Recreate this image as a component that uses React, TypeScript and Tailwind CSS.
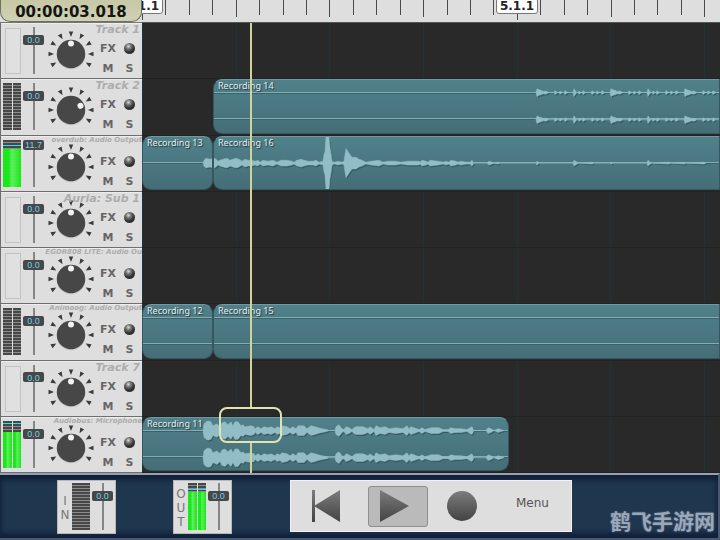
import React from "react";

type MeterState = { kind: "empty" } | { kind: "mono" | "stereo"; peak?: number; level?: number };

type Envelope = { width: number; points: [number, number][] };

type Clip = {
  title: string;
  size: string;
  channels: 1 | 2;
  wave?: Envelope;
};

type Track = {
  name: string;
  small?: boolean;
  gain: number;
  label: string;
  pan: number;
  meter: MeterState;
  delayed?: boolean;
  clips: Clip[];
};

const idle: MeterState = { kind: "empty" };
const dark: MeterState = { kind: "stereo" };

/* Envelopes: pairs of time (px from the clip's start) and amplitude. */
const wave13: Envelope = {
  width: 70,
  points: [[60, 0], [61, 3], [63, 5], [67, 4], [70, 5]],
};

const drumHit = (start: number, loud: number): [number, number][] => {
  const hit = (at: number, amp: number): [number, number][] => [
    [start + at - 1, 0],
    [start + at, amp],
    [start + at + 2, amp / 4],
    [start + at + 3, 0],
  ];
  return [
    [start - 1, 0],
    [start, loud],
    [start + 2, loud * 0.7],
    [start + 5, loud * 0.5],
    [start + 6, loud * 0.3],
    [start + 9, loud * 0.4],
    [start + 12, 0],
    ...hit(18, loud * 0.5),
    ...hit(23, loud * 0.4),
    ...hit(28, loud * 0.5),
    ...hit(37, loud),
    ...hit(42, loud * 0.4),
    ...hit(46, loud * 0.5),
    ...hit(55, loud * 0.5),
    ...hit(60, loud * 0.4),
    ...hit(65, loud * 0.5),
  ];
};

const wave14: Envelope = {
  width: 520,
  points: [...drumHit(323, 4), ...drumHit(397, 4), ...drumHit(471, 4)],
};

const wave16: Envelope = {
  width: 520,
  points: [
    [0, 5], [2, 4], [4, 2], [6, 3], [9, 4], [13, 5], [16, 3], [19, 4], [22, 5], [25, 4], [28, 2],
    [31, 4], [34, 3], [38, 3], [41, 2], [44, 3], [46, 1], [49, 3], [54, 2], [59, 3], [63, 1],
    [67, 3], [73, 3], [78, 2], [80, 1], [83, 3], [87, 4], [90, 3], [94, 2], [99, 2], [102, 3],
    [105, 1], [109, 2], [110, 9], [111, 12], [112, 27], [115, 27], [116, 16], [117, 10], [118, 3], [119, 1],
    [121, 1], [124, 2], [128, 1], [130, 2], [131, 9], [132, 15], [134, 12], [136, 9], [138, 6],
    [142, 6], [145, 4], [148, 3], [152, 1], [157, 2], [165, 3], [169, 1], [174, 2], [181, 2],
    [187, 1], [194, 2], [199, 2], [205, 2], [206, 1], [208, 3], [212, 2], [214, 1], [216, 3],
    [224, 2], [229, 1], [232, 2], [235, 1], [237, 3], [242, 2], [244, 1], [247, 2], [252, 1],
    [256, 1], [258, 3], [260, 0], [273, 0], [275, 2], [278, 1], [280, 0],
    [284, 1], [286, 0], [322, 0], [323, 2], [325, 0], [359, 0], [360, 3], [363, 1], [365, 0],
    [378, 1], [380, 0], [396, 0], [397, 1], [399, 0], [433, 0], [434, 3], [436, 1], [438, 0],
    [455, 1], [457, 0], [470, 1], [472, 0], [490, 1], [492, 0],
  ],
};

const wave11: Envelope = {
  width: 366,
  points: [
    [60, 0], [61, 7], [63, 9], [65, 10], [68, 9], [70, 5], [72, 6], [74, 7], [77, 4], [79, 8], [82, 9],
    [85, 6], [88, 9], [90, 5], [92, 9], [95, 9], [98, 5], [100, 6], [102, 4], [108, 5], [111, 4],
    [112, 2], [115, 4], [118, 2], [121, 4], [125, 3], [128, 4], [132, 2], [134, 4], [137, 3],
    [139, 5], [144, 4], [147, 2], [150, 4], [153, 2], [155, 5], [161, 5], [164, 2], [168, 5],
    [172, 4], [175, 3], [179, 2], [184, 1], [186, 0], [192, 0], [193, 4], [196, 6], [199, 2],
    [201, 1], [203, 4], [206, 3], [209, 1], [211, 3], [213, 4], [220, 4], [225, 2], [227, 4],
    [231, 1], [233, 5], [237, 3], [242, 4], [246, 2], [253, 3], [260, 2], [264, 5], [266, 2],
    [268, 4], [271, 3], [276, 1], [279, 3], [282, 1], [288, 3], [296, 3], [300, 1], [305, 1],
    [308, 3], [312, 2], [318, 2], [324, 1], [327, 3], [329, 4], [331, 0], [343, 0], [345, 3],
    [348, 2], [351, 0], [355, 2], [358, 1], [361, 0],
  ],
};

const tracks: Track[] = [
  { name: "Track 1", gain: 79, label: "0.0", pan: 0, meter: idle, clips: [] },
  {
    name: "Track 2", gain: 79, label: "0.0", pan: 66, meter: dark, delayed: true,
    clips: [{ title: "Recording 14", size: "flex-1", channels: 2, wave: wave14 }],
  },
  {
    name: "overdub: Audio Output", small: true, gain: 100, label: "11.7", pan: 0,
    meter: { kind: "mono", peak: 5, level: 9 },
    clips: [
      { title: "Recording 13", size: "w-[71px]", channels: 1, wave: wave13 },
      { title: "Recording 16", size: "flex-1", channels: 1, wave: wave16 },
    ],
  },
  { name: "Auria: Sub 1", gain: 79, label: "0.0", pan: 0, meter: idle, clips: [] },
  { name: "EGDR808 LITE: Audio Ou", small: true, gain: 79, label: "0.0", pan: 0, meter: idle, clips: [] },
  {
    name: "Animoog: Audio Output", small: true, gain: 79, label: "0.0", pan: 0, meter: dark,
    clips: [
      { title: "Recording 12", size: "w-[71px]", channels: 2 },
      { title: "Recording 15", size: "flex-1", channels: 2 },
    ],
  },
  { name: "Track 7", gain: 79, label: "0.0", pan: 0, meter: idle, clips: [] },
  {
    name: "Audiobus: Microphone", small: true, gain: 79, label: "0.0", pan: 0,
    meter: { kind: "stereo", peak: 2, level: 11 },
    clips: [{ title: "Recording 11", size: "w-[367px]", channels: 2, wave: wave11 }],
  },
];

function MeterBar({ peak, level }: { peak?: number; level?: number }) {
  return (
    <div className="relative flex-1 bg-[repeating-linear-gradient(180deg,#474747_0px,#474747_2px,#8c8c8c_2px,#8c8c8c_3px)]">
      {level !== undefined && (
        <div
          className="absolute inset-x-0 bottom-0 bg-[repeating-linear-gradient(180deg,#00f800_0px,#00f800_2px,#4cc84c_2px,#4cc84c_3px)]"
          style={{ top: level }}
        >
          <div className="h-full bg-linear-to-r from-transparent from-30% via-white/30 to-transparent" />
        </div>
      )}
      {peak !== undefined && <div className="absolute inset-x-0 h-px bg-[#2fe0ee]" style={{ top: peak }} />}
    </div>
  );
}

function Meter({ meter }: { meter: MeterState }) {
  if (meter.kind === "empty") {
    return <div className="mt-px ml-[2px] h-[46px] w-4 border border-[#c2c2c2] bg-[#e0e0e0]" />;
  }
  return (
    <div className="flex h-[47px] w-[18px] gap-px">
      <MeterBar peak={meter.peak} level={meter.level} />
      {meter.kind === "stereo" && <MeterBar peak={meter.peak} level={meter.level} />}
    </div>
  );
}

function Fader({ name, value, label }: { name: string; value: number; label: string }) {
  return (
    <div className="relative h-[47px] w-[21px]">
      <input
        type="range"
        aria-label={name}
        defaultValue={value}
        className="block h-full w-full appearance-none bg-[linear-gradient(90deg,transparent_10px,#858585_10px,#858585_12px,transparent_12px)] [direction:rtl] [writing-mode:vertical-lr] [&::-webkit-slider-thumb]:h-[10px] [&::-webkit-slider-thumb]:w-[21px] [&::-webkit-slider-thumb]:appearance-none [&::-webkit-slider-thumb]:rounded-xs [&::-webkit-slider-thumb]:bg-[#474747]"
      />
      <output
        className="pointer-events-none absolute inset-x-0 text-center font-['Liberation_Sans_Narrow','Liberation_Sans',sans-serif] text-[9px] leading-[10px] text-[#6dcfe8]"
        style={{ top: Math.round(((100 - value) / 100) * 37) }}
      >
        {label}
      </output>
    </div>
  );
}

const knobMarks = [-120, -90, -60, -30, 0, 30, 60, 90, 120];

function Knob({ name, angle }: { name: string; angle: number }) {
  return (
    <div className="relative size-[46px]">
      <svg viewBox="-23 -23 46 46" className="block size-full" aria-hidden="true">
        {knobMarks.map((a) => (
          <path key={a} d="M-2.200 -22.500H2.200L0 -17Z" fill="#3a3a3a" transform={`rotate(${a})`} />
        ))}
        <circle r="14.3" cy="1" fill="#c3c3c3" />
        <circle r="14.2" fill="#474747" />
        <circle cy="-10.4" r="3" fill="#f2f2f2" transform={`rotate(${angle})`} />
      </svg>
      <input
        type="range"
        min={-120}
        max={120}
        aria-label={name}
        defaultValue={angle}
        className="absolute inset-0 size-full opacity-0"
      />
    </div>
  );
}

function TrackHeader({ track }: { track: Track }) {
  return (
    <section className="relative flex min-h-0 overflow-hidden border-b border-l border-[#6e6e6e] bg-[#dedede] pt-1 pl-[2px] shadow-[inset_0_1px_0_#ededed]">
      <Meter meter={track.meter} />
      <div className="ml-[2px]">
        <Fader name={`${track.name} volume`} value={track.gain} label={track.label} />
      </div>
      <div className="ml-1 pt-1">
        <Knob name={`${track.name} pan`} angle={track.pan} />
      </div>
      <div className="ml-[3px] grid h-[52px] grid-cols-[22px_21px] grid-rows-[19px_21px] items-center justify-items-center pt-3 text-[11px] leading-none font-bold text-[#666]">
        <button type="button">FX</button>
        <button
          type="button"
          aria-label="Record"
          className="size-[11px] rounded-full bg-[radial-gradient(circle_at_40%_30%,#ddd_0%,#777_25%,#2c2c2c_60%,#444_100%)]"
        />
        <button type="button">M</button>
        <button type="button">S</button>
      </div>
      <h2
        className={`absolute top-0 right-0 whitespace-nowrap italic font-bold text-[#adadad] ${
          track.small ? "text-[7px] leading-[9px]" : "pr-[2px] text-[11px] leading-[14px]"
        }`}
      >
        {track.name}
      </h2>
    </section>
  );
}

function wavePath(env: Envelope, centre: number) {
  const top = env.points.map(([x, a]) => `${x} ${centre - a}`);
  const bottom = [...env.points].reverse().map(([x, a]) => `${x} ${centre + a}`);
  return `M${[...top, ...bottom].join("L")}Z`;
}

function ClipView({ clip }: { clip: Clip }) {
  const centres = clip.channels === 2 ? [13, 41] : [27];
  return (
    <article
      className={`relative min-w-0 overflow-hidden rounded-[9px] border border-t-[#7299a1] border-r-[#35575e] border-b-[#35575e] border-l-[#35575e] bg-linear-to-b from-[#50818b] to-[#456e77] ${clip.size} ${
        clip.size === "flex-1" ? "rounded-r-none" : "shrink-0"
      }`}
    >
      <div className="absolute inset-0 flex flex-col">
        {centres.map((c) => (
          <div key={c} className="flex flex-1 flex-col justify-center">
            <div className="h-px bg-[#83adb5]" />
            <div className="h-px bg-[#3b626a]" />
          </div>
        ))}
      </div>
      {clip.wave && (
        <svg
          className="absolute top-0 left-0 h-full"
          width={clip.wave.width}
          viewBox={`0 0 ${clip.wave.width} 54`}
          preserveAspectRatio="none"
          aria-hidden="true"
        >
          {centres.map((c) => (
            <g key={c}>
              <path d={wavePath(clip.wave!, c)} fill="#365a62" transform="translate(1 1.5)" />
              <path d={wavePath(clip.wave!, c)} fill="#93bdc6" stroke="#93bdc6" strokeWidth="0.5" strokeLinejoin="round" />
            </g>
          ))}
        </svg>
      )}
      <h3 className="relative pl-1 font-['Noto_Sans',sans-serif] text-[9px] leading-[11px] whitespace-nowrap text-[#e4eef0] [text-shadow:1px_1px_1px_#1d3135]">
        {clip.title}
      </h3>
    </article>
  );
}

const ticks = Array.from({ length: 80 }, (_, i) => i);
const BEAT = 23.43;

function Ruler() {
  return (
    <div className="relative min-w-0 flex-1 overflow-hidden border-b border-[#555] bg-[#dedede]">
      <svg className="block h-full w-[1874px]" aria-hidden="true">
        {ticks.map((i) => (
          <rect
            key={i}
            x={Math.round(i * BEAT)}
            width="1"
            height={i % 16 === 0 ? 20 : i % 4 === 0 ? 17 : 15}
            fill="#4a4a4a"
          />
        ))}
      </svg>
      <span className="absolute top-[-2px] left-[-21px] w-[42px] rounded-[3px] border border-[#777] bg-white text-center text-xs leading-[14px] font-bold text-[#222]">
        1.1.1
      </span>
      <span className="absolute top-[-2px] left-[354px] w-[42px] rounded-[3px] border border-[#777] bg-white text-center text-xs leading-[14px] font-bold text-[#222]">
        5.1.1
      </span>
    </div>
  );
}

function MasterStrip({ letters, meter, name }: { letters: string; meter: MeterState; name: string }) {
  return (
    <section className="flex h-[54px] w-[59px] shrink-0 border border-[#b9b9b4] bg-[#dedede] pt-[2px]">
      <h2 className="flex w-[14px] flex-col items-center justify-center text-xs leading-[14px] text-[#777]">
        {letters.split("").map((l) => (
          <span key={l}>{l}</span>
        ))}
      </h2>
      <Meter meter={meter} />
      <div className="ml-[2px]">
        <Fader name={name} value={78} label="0.0" />
      </div>
    </section>
  );
}

function TransportDefs() {
  return (
    <svg className="absolute size-0" aria-hidden="true">
      <defs>
        <linearGradient id="metal" x1="0" y1="0" x2="0" y2="1">
          <stop offset="0" stopColor="#7c7c7c" />
          <stop offset="1" stopColor="#434343" />
        </linearGradient>
      </defs>
    </svg>
  );
}

export default function App() {
  return (
    <div className="flex h-screen min-h-[540px] flex-col overflow-hidden bg-[#292929] font-['DejaVu_Sans',Verdana,sans-serif]">
      <header className="flex h-[23px] shrink-0 bg-[#dedede]">
        <div className="z-10 w-[142px] shrink-0 border-b border-[#777]">
          <time className="block h-[22px] rounded-b-[10px] border-x border-b border-[#6f705f] bg-linear-to-b from-[#c6c8a6] to-[#cfd1b4] pt-1 text-center text-[15px] leading-4 font-bold text-[#151515]">
            00:00:03.018
          </time>
        </div>
        <Ruler />
      </header>

      <main className="flex min-h-0 flex-1">
        <div className="grid w-[142px] shrink-0 grid-rows-8">
          {tracks.map((t) => (
            <TrackHeader key={t.name} track={t} />
          ))}
        </div>
        <div className="relative grid min-w-0 flex-1 grid-rows-8 overflow-hidden bg-[#292929] bg-[repeating-linear-gradient(90deg,#1d3338_0px,#1d3338_1px,transparent_1px,transparent_93.7px)]">
          {tracks.map((t) => (
            <div key={t.name} className="flex min-h-0 min-w-0 border-b border-[#222] pb-px">
              {t.delayed && <div className="w-[71px] shrink-0" />}
              {t.clips.map((c) => (
                <ClipView key={c.title} clip={c} />
              ))}
            </div>
          ))}
          <div className="pointer-events-none absolute inset-y-0 left-[77px] flex w-[63px] flex-col items-center">
            <div className="w-[2px] flex-1 bg-[#d2d39c]" />
            <div className="h-9 w-full rounded-lg border-2 border-[#e2e4b0]" />
            <div className="h-[30px] w-[2px] bg-[#d2d39c]" />
          </div>
        </div>
      </main>

      <footer className="relative flex h-[67px] shrink-0 items-start border-t-2 border-r-2 border-b-2 border-t-[#98a0ae] border-r-[#4a5a72] border-b-[#4a5a72] bg-[#1f364f] pt-[5px] pl-[57px] shadow-[inset_0_5px_5px_#11203a,inset_0_-5px_5px_#11203a]">
        <TransportDefs />
        <MasterStrip letters="IN" meter={{ kind: "mono" }} name="Input level" />
        <div className="w-[57px] shrink-0" />
        <MasterStrip letters="OUT" meter={{ kind: "stereo", peak: 6, level: 9 }} name="Output level" />
        <nav className="ml-[58px] flex h-[52px] w-[282px] shrink-0 items-center border border-[#f2f2f2] bg-[#dedede]">
          <button type="button" aria-label="Return to start" className="ml-[21px]">
            <svg width="29" height="32" viewBox="0 0 29 32">
              <path d="M0 0H3V32H0Z" fill="url(#metal)" />
              <path d="M28 0V32L2 16Z" fill="url(#metal)" />
            </svg>
          </button>
          <button
            type="button"
            aria-label="Play"
            className="ml-[27px] flex h-[41px] w-[60px] items-center rounded-[3px] border border-[#8e8e8e] bg-[#bababa] pl-[11px]"
          >
            <svg width="29" height="32" viewBox="0 0 29 32">
              <path d="M0 0V32L29 16Z" fill="url(#metal)" />
            </svg>
          </button>
          <button type="button" aria-label="Record" className="ml-[19px]">
            <svg width="30" height="30" viewBox="0 0 30 30">
              <circle cx="15" cy="15" r="15" fill="url(#metal)" />
            </svg>
          </button>
          <button type="button" className="ml-[39px] pb-1.5 text-xs text-[#555]">
            Menu
          </button>
        </nav>
        <p className="absolute right-[3px] bottom-[3px] font-['Noto_Sans_CJK_SC',sans-serif] text-[21px] leading-[30px] font-bold text-[#9aa7b8] [text-shadow:0_0_2px_#66758c]">
          鹤飞手游网
        </p>
      </footer>
    </div>
  );
}
